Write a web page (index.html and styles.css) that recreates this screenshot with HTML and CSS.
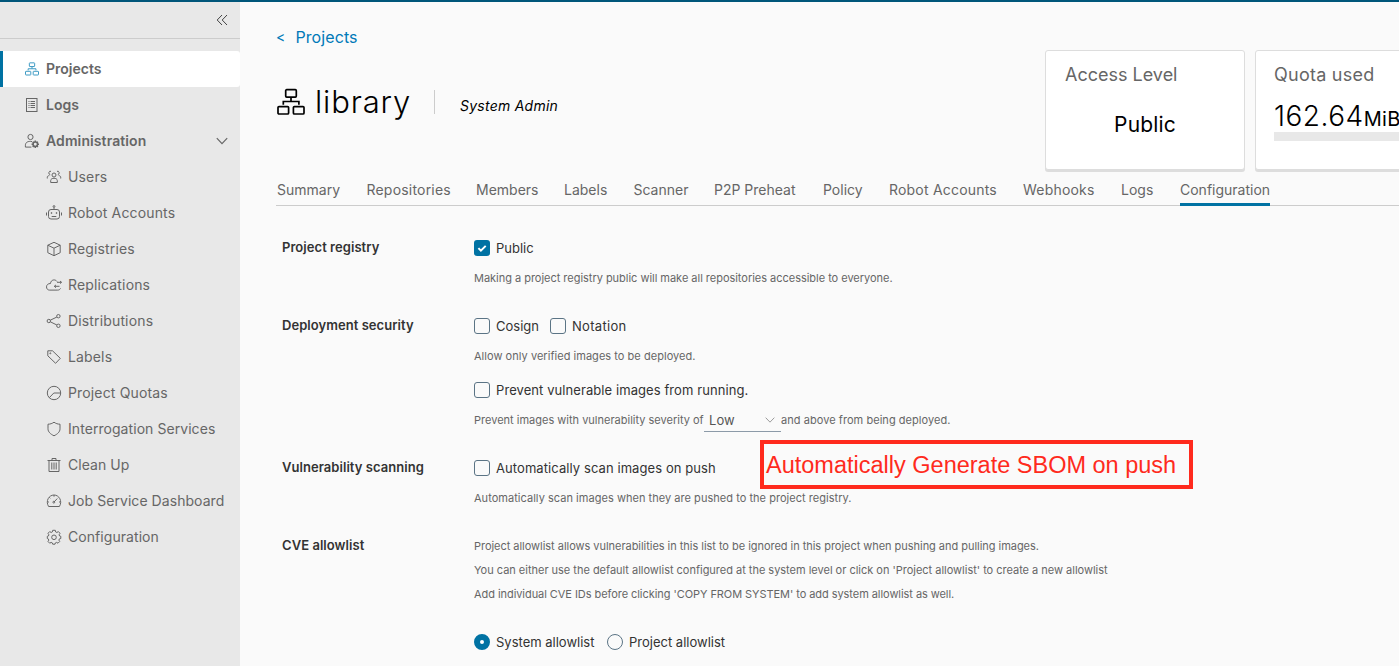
FILE: index.html
```html
<!DOCTYPE html>
<html lang="en">
<head>
<meta charset="utf-8">
<title>library - Configuration</title>
<link rel="stylesheet" href="styles.css">
</head>
<body>
<svg width="0" height="0" class="defs">
  <symbol id="i-tree" viewBox="0 0 28 28"><rect x="8.7" y="1.7" width="10.6" height="7.4" rx="1"/><rect x="1" y="18.6" width="10.6" height="7.4" rx="1"/><rect x="16.4" y="18.6" width="10.6" height="7.4" rx="1"/><path d="M14 9.1v4.4M6.3 16.8v-3.3h15.6v3.3"/></symbol>
  <symbol id="i-check" viewBox="0 0 16 16"><path d="M4.4 8.1l2.500 2.500 4.800-4.700"/></symbol>
  <symbol id="i-down" viewBox="0 0 12 12"><path d="M.8 3.200L6 8.600l5.200-5.400"/></symbol>
</svg>
<div class="topbar"></div>
<div class="shell">
  <nav class="sidebar">
    <div class="collapse"><svg class="icon" viewBox="0 0 12 12"><path d="M6 1L1.200 6 6 11M11 1L6.200 6l4.800 5"/></svg></div>
    <a class="item active"><svg class="icon"><use href="#i-tree"/></svg><span>Projects</span></a>
    <a class="item"><svg class="icon" viewBox="0 0 16 16"><rect x="2.500" y="1.500" width="10.500" height="13"/><path d="M4.500 4.500h1M6.500 4.500h4.500M4.500 6.500h1M6.500 6.500h4.500M4.500 8.500h1M6.500 8.500h4.500M4.500 10.500h1M6.500 10.500h4.500"/></svg><span>Logs</span></a>
    <a class="item admin"><svg class="icon" viewBox="0 0 16 16"><circle cx="6.500" cy="4" r="2.600"/><path d="M8 8.600c-4-.8-6.600.8-6.600 3.600v1.900h6"/><circle cx="11.300" cy="11.300" r="2.200" class="thick"/><path d="M11.300 7.600v1.500M11.300 13.500V15M7.600 11.300h1.500M13.500 11.300H15M8.700 8.700l1 1M12.900 12.900l1 1M13.900 8.700l-1 1M9.700 12.900l-1 1" class="thick"/></svg><span>Administration</span><svg class="chev"><use href="#i-down"/></svg></a>
    <a class="item sub"><svg class="icon" viewBox="0 0 16 16"><circle cx="8" cy="6" r="2"/><path d="M4.700 13.500v-2c0-3 6.600-3 6.600 0v2zM5 2.300a1.700 1.700 0 1 0-.8 3.300M11 2.300a1.700 1.700 0 1 1 .8 3.300M1.300 9.500V8.200c0-1 .8-1.500 2-1.600M14.700 9.500V8.200c0-1-.8-1.500-2-1.600"/></svg><span>Users</span></a>
    <a class="item sub"><svg class="icon" viewBox="0 0 16 16"><rect x="2.500" y="4.500" width="11" height="9.500" rx="2.500"/><path d="M8 4.500V2.500M.5 7.500v3M15.500 7.500v3M5.700 11.500h4.600"/><circle cx="8" cy="1.500" r=".9"/><circle cx="5.500" cy="8" r=".5"/><circle cx="10.500" cy="8" r=".5"/></svg><span>Robot Accounts</span></a>
    <a class="item sub"><svg class="icon" viewBox="0 0 16 16"><path d="M8 1.300l6.200 2.900v7.500L8 14.700l-6.200-3V4.200zM1.800 4.200L8 7.200l6.200-3M8 7.200v7.500"/></svg><span>Registries</span></a>
    <a class="item sub"><svg class="icon" viewBox="0 0 16 16"><path d="M11 4.500C9.300 1.900 4.800 2.500 4.500 6.500 2 6.400.5 8 .5 9.900c0 2 1.400 3.200 3 3.200h8.200c1.300 0 2.300-.6 2.800-1.700M11 5.300h4.500M14 4l1.500 1.300L14 6.600M13.500 9.300H8.300M10 7.900L8.300 9.300 10 10.700"/></svg><span>Replications</span></a>
    <a class="item sub"><svg class="icon" viewBox="0 0 16 16"><circle cx="2.800" cy="8" r="1.700"/><circle cx="12.400" cy="3.200" r="1.700"/><circle cx="12.400" cy="12.800" r="1.700"/><path d="M4.300 7.200L10.900 4M4.300 8.800l6.600 3.200"/></svg><span>Distributions</span></a>
    <a class="item sub"><svg class="icon" viewBox="0 0 16 16"><path d="M1.800 1.800h4.700l7.800 7.500-4.700 5-7.800-7.500z"/><circle cx="4.300" cy="4.300" r=".5"/></svg><span>Labels</span></a>
    <a class="item sub"><svg class="icon" viewBox="0 0 16 16"><circle cx="8" cy="8" r="6.700"/><path d="M3.300 12.700L7.800 8h6.900"/></svg><span>Project Quotas</span></a>
    <a class="item sub tight"><svg class="icon" viewBox="0 0 16 16"><path d="M8 1.200c1.800 1.300 3.800 2 6 2v4.600c0 3-2.300 5.200-6 7-3.700-1.800-6-4-6-7V3.200c2.200 0 4.200-.7 6-2z"/></svg><span>Interrogation Services</span></a>
    <a class="item sub tight"><svg class="icon" viewBox="0 0 16 16"><path d="M1.500 3.500h13M6 3.200V1.500h4v1.700M3 3.500v11h10v-11M5.800 5.500v7M8 5.500v7M10.200 5.500v7"/></svg><span>Clean Up</span></a>
    <a class="item sub tight"><svg class="icon" viewBox="0 0 16 16"><path d="M2.600 13.500C-.8 8 3 2 8 2s8.800 6 5.400 11.500zM8 9l3.300-3.500M8 2v1.700M3.300 4.300l1 1M1.500 9h1.400M13 9h1.500"/><circle cx="7.800" cy="9.200" r=".9"/></svg><span>Job Service Dashboard</span></a>
    <a class="item sub tight"><svg class="icon" viewBox="0 0 16 16"><path d="M6.700 1.300h2.600l.4 1.700 1.100.5 1.600-.9 1.600 1.700-.9 1.500.5 1.200 1.200.3v2.200l-1.400.4-.5 1.200.8 1.400-1.700 1.700-1.400-.8-1.200.5-.4 1.300H6.700l-.4-1.300-1.200-.5-1.400.8L2 12.500l.8-1.400-.5-1.200-1-.4V7.300l1.100-.3.500-1.200L2 4.300l1.700-1.700 1.500.9L6.300 3z"/><circle cx="8" cy="8.300" r="2.300"/></svg><span>Configuration</span></a>
  </nav>

  <main class="main">
    <header class="head">
      <div class="intro">
        <div class="crumb"><span>&lt;</span><a>Projects</a></div>
        <div class="title">
          <svg class="title-icon"><use href="#i-tree"/></svg>
          <h1>library</h1>
          <em>System Admin</em>
        </div>
      </div>
      <div class="cards">
        <section class="card"><h2>Access Level</h2><p class="level">Public</p></section>
        <section class="card"><h2 class="quota-h">Quota used</h2><p class="quota"><b>162.64</b><i>MiB</i></p><div class="bar"></div></section>
      </div>
    </header>

    <div class="tabs">
      <a>Summary</a><a class="wide">Repositories</a><a>Members</a><a>Labels</a><a>Scanner</a><a>P2P Preheat</a><a>Policy</a><a class="wide">Robot Accounts</a><a class="wide">Webhooks</a><a>Logs</a><a class="on">Configuration</a>
    </div>

    <form class="form">
      <div class="row">
        <div class="name">Project registry</div>
        <div class="field">
          <div class="opts"><label><span class="box checked"><svg><use href="#i-check"/></svg></span>Public</label></div>
          <p class="help tight">Making a project registry public will make all repositories accessible to everyone.</p>
        </div>
      </div>
      <div class="row">
        <div class="name">Deployment security</div>
        <div class="field">
          <div class="opts"><label class="cosign"><span class="box"></span>Cosign</label><label class="notation"><span class="box"></span>Notation</label></div>
          <p class="help">Allow only verified images to be deployed.</p>
          <div class="opts second"><label class="prevent"><span class="box"></span>Prevent vulnerable images from running.</label></div>
          <p class="help severity"><span class="sev-text">Prevent images with vulnerability severity of</span><span class="select">Low<svg><use href="#i-down"/></svg></span><span class="sev-end">and above from being deployed.</span></p>
        </div>
      </div>
      <div class="row">
        <div class="name">Vulnerability scanning</div>
        <div class="field">
          <div class="opts"><label class="scan"><span class="box"></span>Automatically scan images on push</label></div>
          <p class="help">Automatically scan images when they are pushed to the project registry.</p>
          <div class="callout">Automatically Generate SBOM on push</div>
        </div>
      </div>
      <div class="row">
        <div class="name">CVE allowlist</div>
        <div class="field">
          <div class="notes">
            <p>Project allowlist allows vulnerabilities in this list to be ignored in this project when pushing and pulling images.</p>
            <p class="note-link">You can either use the default allowlist configured at the system level or click on 'Project allowlist' to create a new allowlist</p>
            <p class="note-copy">Add individual CVE IDs before clicking 'COPY FROM SYSTEM' to add system allowlist as well.</p>
          </div>
          <div class="opts radios"><label class="system"><span class="radio picked"></span>System allowlist</label><label><span class="radio"></span>Project allowlist</label></div>
        </div>
      </div>
    </form>
  </main>
</div>
</body>
</html>
```
FILE: styles.css
```css
* { box-sizing: border-box; }
body { margin: 0; height: 666px; overflow: hidden; background: #fafafa; color: #333; font-family: Inter, "Noto Sans", sans-serif; font-size: 13px; }
p, h1, h2 { margin: 0; font-weight: 400; }
svg { fill: none; stroke: currentColor; flex: none; }
.defs { position: absolute; }
.topbar { height: 2px; background: #00567a; }
.shell { display: flex; height: 664px; }

.sidebar { width: 240px; flex: none; background: #e8e8e8; color: #666; }
.collapse { height: 37px; margin-bottom: 12px; padding: 12px 12px 0 0; border-bottom: 1px solid #ccc; display: flex; justify-content: flex-end; color: #444; }
.collapse .icon { width: 12px; height: 12px; margin: 0; }
.item { display: flex; align-items: center; height: 36px; padding-left: 24px; font-size: 14px; font-weight: 600; white-space: nowrap; }
.item span { padding-bottom: 2px; }
.item.admin { letter-spacing: .1px; }
.item.sub { padding-left: 46px; font-weight: 400; letter-spacing: .15px; }
.item.sub.tight { letter-spacing: .06px; }
.item.active { background: #fff; border-left: 3px solid #0072a3; padding-left: 21px; border-radius: 0 3px 3px 0; }
.icon { width: 16px; height: 16px; margin-right: 6px; stroke-width: 1; }
.active .icon { width: 14px; height: 14px; margin: 0 7px 0 1px; color: #3f9bc4; stroke-width: 2; }
.thick { stroke-width: 1.5; }
.chev { width: 12px; height: 12px; margin: 0 12px 0 auto; stroke-width: 1.2; }

.main { flex: 1; min-width: 0; padding-left: 36px; overflow: hidden; }
.head { display: flex; height: 172px; }
.intro { width: 769px; flex: none; padding-top: 23px; }
.crumb { display: flex; gap: 10px; color: #0079b8; font-size: 16px; line-height: 24px; align-items: center; letter-spacing: .1px; }
.crumb span { font-size: 14px; }
.title { display: flex; align-items: center; margin-top: 31px; height: 44px; color: #000; }
.title-icon { width: 28px; height: 28px; margin-left: 1px; stroke-width: 1.7; }
.title h1 { font-size: 31px; line-height: 44px; margin-left: 10px; width: 119px; font-weight: 300; letter-spacing: .85px; }
.title em { font-size: 14px; line-height: 24px; padding-left: 25px; border-left: 1px solid #ccc; height: 24px; padding-top: 4px; letter-spacing: .25px; }
.cards { display: flex; gap: 10px; padding-top: 48px; flex: none; }
.card { width: 200px; height: 120px; flex: none; background: #fff; border: 1px solid #ddd; border-radius: 3px; box-shadow: 0 2px 0 #ddd; padding: 12px 18px; color: #000; }
.card h2 { font-size: 18px; line-height: 24px; color: #666; padding-left: 1px; }
.card .quota-h { letter-spacing: .25px; padding-left: 0; }
.level { font-size: 21px; line-height: 28px; margin-top: 24px; text-align: center; letter-spacing: .15px; }
.quota { white-space: nowrap; height: 34px; line-height: 34px; margin-top: 12px; }
.quota b { font-size: 28px; font-weight: 300; letter-spacing: .5px; }
.quota i { font-size: 20px; font-style: normal; letter-spacing: .3px; }
.bar { height: 9px; background: #e8e8e8; }
.quota + .bar { margin-top: 0; }
.quota { display: flex; align-items: baseline; margin-bottom: 0; }
.quota-h + .quota { height: 36px; margin-top: 10px; line-height: 38px; margin-bottom: 0; }
.quota-h + .quota + .bar { margin-top: -1px; }

.tabs { display: grid; grid-template-columns: 89.500px 109.500px 88px 69.500px 80.500px 109px 66px 134px 98px 59px 90px; width: 1200px; height: 32px; padding-left: 1px; border-bottom: 1px solid #ccc; color: #666; font-size: 14px; line-height: 32px; white-space: nowrap; }
.tabs .wide { letter-spacing: .2px; }
.tabs .on { height: 32px; border-bottom: 3px solid #0072a3; }

.form { display: grid; gap: 24px; padding: 30px 0 0 6px; }
.row { display: grid; grid-template-columns: 192px 900px; line-height: 24px; }
.name { font-weight: 600; line-height: 22px; letter-spacing: .05px; }
.field { position: relative; white-space: nowrap; }
.opts { display: flex; height: 24px; line-height: 22px; padding-bottom: 1px; }
.opts.second { margin-top: 10px; }
.opts label { display: flex; align-items: center; gap: 6px; }
.opts .notation { letter-spacing: .3px; }
.opts .prevent, .opts .scan { letter-spacing: .08px; }
.cosign { width: 76px; }
.box { width: 16px; height: 16px; border: 1px solid #5b7485; border-radius: 3px; margin-top: 1px; flex: none; }
.checked { background: #0072a3; border: 0; color: #fff; display: flex; }
.checked svg { width: 16px; height: 16px; stroke-width: 2; }
.help { margin-top: 6px; height: 24px; letter-spacing: .035px; }
.help.tight { letter-spacing: -.025px; }
.help, .notes { font-size: 11px; color: #666; }
.notes { letter-spacing: -.035px; }
.note-link { letter-spacing: -.015px; }
.note-copy { letter-spacing: -.06px; }
.severity { display: flex; letter-spacing: 0; }
.sev-text { width: 230px; }
.sev-end { letter-spacing: .05px; }
.select { width: 77px; height: 24px; border-bottom: 1px solid #8c9aa8; padding: 0 6px 0 5px; display: flex; align-items: center; justify-content: space-between; font-size: 13px; color: #555; letter-spacing: .1px; }
.select svg { width: 10px; height: 10px; color: #888; }
.callout { position: absolute; left: 286px; top: -16px; width: 433px; height: 49px; border: 4px solid #ff2a1d; color: #ff2a1d; font: 23.500px/42px "Liberation Sans", sans-serif; padding-left: 2px; }
.radios { margin-top: 24px; }
.system { width: 133px; }
.radio { width: 16px; height: 16px; border: 1px solid #5b7485; border-radius: 50%; margin-top: 1px; }
.picked { border: 6px solid #0072a3; background: #fff; }
```
